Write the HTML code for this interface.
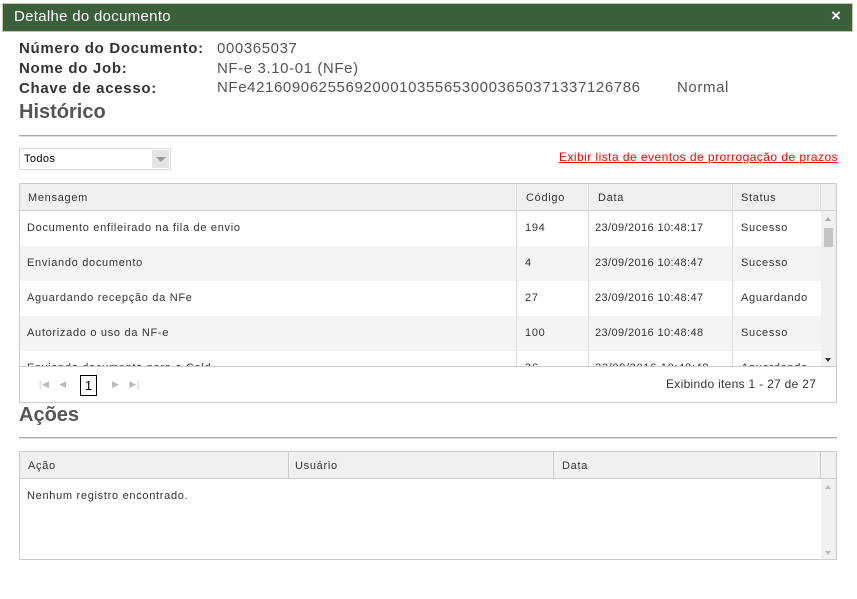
<!DOCTYPE html>
<html><head><meta charset="utf-8"><style>
*{box-sizing:border-box;margin:0;padding:0}
body{width:857px;height:599px;background:#fff;font-family:"Liberation Sans",Arial,sans-serif;position:relative;overflow:hidden;color:#333}
.abs{position:absolute}
.title{left:2px;top:3px;width:851px;height:29px;background:#3b5f3a;border:1px solid #c8c4a8;color:#fff;font-size:15px;letter-spacing:0.3px;padding:4px 0 0 11px}
.x{left:831px;top:9px;color:#fff;font-weight:bold;font-size:17px;line-height:14px}
.lbl{font-size:15px;font-weight:bold;color:#333;left:19px;letter-spacing:0.7px}
.val{font-size:15px;color:#555;left:217px;letter-spacing:0.6px}
h2{position:absolute;font-size:20px;font-weight:bold;color:#555;left:19px}
.hr{left:19px;width:818px;height:2px;background:#aaa;border-bottom:1px solid #ddd}
.grid{left:19px;width:818px;border:1px solid #ccc}
.t{font-size:11px;letter-spacing:0.7px;color:#333;white-space:nowrap}
.hdr{background:#f0f0f0;border-bottom:1px solid #ccc}
.vl{position:absolute;width:1px;background:#ddd}
</style></head><body>
<div class="abs title">Detalhe do documento</div>
<div class="abs x">×</div>
<div class="abs lbl" style="top:40px">Número do Documento:</div>
<div class="abs lbl" style="top:60px">Nome do Job:</div>
<div class="abs lbl" style="top:80px">Chave de acesso:</div>
<div class="abs val" style="top:40px">000365037</div>
<div class="abs val" style="top:60px">NF-e 3.10-01 (NFe)</div>
<div class="abs val" style="top:79px">NFe42160906255692000103556530003650371337126786</div>
<div class="abs val" style="top:79px;left:677px">Normal</div>
<h2 style="top:101px">Histórico</h2>
<div class="abs hr" style="top:135px"></div>
<div class="abs" style="left:19px;top:148px;width:152px;height:22px;border:1px solid #ddd;background:#fff"><span class="t" style="position:absolute;left:4px;top:4px;color:#000;letter-spacing:0.4px">Todos</span><div style="position:absolute;right:1px;top:1px;width:17px;height:18px;background:#e4e4e4"><div style="position:absolute;left:4px;top:7px;border-left:5px solid transparent;border-right:5px solid transparent;border-top:5px solid #999"></div></div></div>
<div class="abs t" style="left:559px;top:150px;color:#f00;text-decoration:underline;font-size:12px;letter-spacing:0.45px">Exibir lista de eventos de prorrogação de prazos</div>

<div class="abs grid" style="top:183px;height:220px">
 <div class="abs hdr" style="left:0;top:0;width:816px;height:27px"></div>
 <div class="abs" style="left:0;top:62px;width:801px;height:35px;background:#f4f4f4"></div>
 <div class="abs" style="left:0;top:132px;width:801px;height:35px;background:#f4f4f4"></div>
 <div class="vl" style="left:496px;top:0;height:182px"></div>
 <div class="vl" style="left:568px;top:0;height:182px"></div>
 <div class="vl" style="left:712px;top:0;height:182px"></div>
 <div class="vl" style="left:800px;top:0;height:27px"></div>
 <div class="abs" style="left:801px;top:27px;width:15px;height:155px;background:#f0f0f0"><div style="position:absolute;left:3px;top:17px;width:9px;height:19px;background:#c4c4c4"></div><div style="position:absolute;left:4px;top:6px;border-left:3px solid transparent;border-right:3px solid transparent;border-bottom:4px solid #aaa"></div><div style="position:absolute;left:4px;bottom:4px;border-left:3px solid transparent;border-right:3px solid transparent;border-top:4px solid #333"></div></div>
 <div class="abs" style="left:0;top:182px;width:816px;height:1px;background:#ccc"></div>
 <div class="abs t" style="left:8px;top:8px">Mensagem</div>
 <div class="abs t" style="left:506px;top:8px">Código</div>
 <div class="abs t" style="left:578px;top:8px">Data</div>
 <div class="abs t" style="left:721px;top:8px">Status</div>
 <div class="abs t" style="left:7px;top:38px">Documento enfileirado na fila de envio</div><div class="abs t" style="left:505px;top:38px">194</div><div class="abs t" style="left:575px;top:38px;letter-spacing:0.4px">23/09/2016 10:48:17</div><div class="abs t" style="left:721px;top:38px">Sucesso</div>
 <div class="abs t" style="left:7px;top:73px">Enviando documento</div><div class="abs t" style="left:505px;top:73px">4</div><div class="abs t" style="left:575px;top:73px;letter-spacing:0.4px">23/09/2016 10:48:47</div><div class="abs t" style="left:721px;top:73px">Sucesso</div>
 <div class="abs t" style="left:7px;top:108px">Aguardando recepção da NFe</div><div class="abs t" style="left:505px;top:108px">27</div><div class="abs t" style="left:575px;top:108px;letter-spacing:0.4px">23/09/2016 10:48:47</div><div class="abs t" style="left:721px;top:108px">Aguardando</div>
 <div class="abs t" style="left:7px;top:143px">Autorizado o uso da NF-e</div><div class="abs t" style="left:505px;top:143px">100</div><div class="abs t" style="left:575px;top:143px;letter-spacing:0.4px">23/09/2016 10:48:48</div><div class="abs t" style="left:721px;top:143px">Sucesso</div>
 <div class="abs" style="left:0;top:171px;width:800px;height:11px;overflow:hidden"><div class="abs t" style="left:7px;top:7px">Enviando documento para o Cold</div><div class="abs t" style="left:505px;top:7px">36</div><div class="abs t" style="left:575px;top:7px">23/09/2016 10:48:48</div><div class="abs t" style="left:721px;top:7px">Aguardando</div></div>
 <div class="abs t" style="left:19px;top:195px;color:#bbb;font-size:9px">|◀&nbsp;&nbsp;&nbsp;◀</div>
 <div class="abs" style="left:60px;top:191px;width:17px;height:21px;border:1px solid #000;font-size:13px;text-align:center;line-height:19px;color:#000">1</div>
 <div class="abs t" style="left:92px;top:195px;color:#bbb;font-size:9px">▶&nbsp;&nbsp;&nbsp;▶|</div>
 <div class="abs t" style="left:646px;top:193px;font-size:12px;letter-spacing:0.3px">Exibindo itens 1 - 27 de 27</div>
</div>

<h2 style="top:404px">Ações</h2>
<div class="abs hr" style="top:437px"></div>
<div class="abs grid" style="top:451px;height:109px">
 <div class="abs hdr" style="left:0;top:0;width:816px;height:27px"></div>
 <div class="vl" style="left:268px;top:0;height:27px;background:#ccc"></div>
 <div class="vl" style="left:533px;top:0;height:27px;background:#ccc"></div>
 <div class="vl" style="left:800px;top:0;height:27px;background:#ccc"></div>
 <div class="abs" style="left:801px;top:27px;width:15px;height:80px;background:#f0f0f0"><div style="position:absolute;left:4px;top:6px;border-left:3px solid transparent;border-right:3px solid transparent;border-bottom:4px solid #bbb"></div><div style="position:absolute;left:4px;bottom:4px;border-left:3px solid transparent;border-right:3px solid transparent;border-top:4px solid #bbb"></div></div>
 <div class="abs t" style="left:8px;top:8px">Ação</div>
 <div class="abs t" style="left:275px;top:8px">Usuário</div>
 <div class="abs t" style="left:542px;top:8px">Data</div>
 <div class="abs t" style="left:7px;top:38px">Nenhum registro encontrado.</div>
</div>
</body></html>
